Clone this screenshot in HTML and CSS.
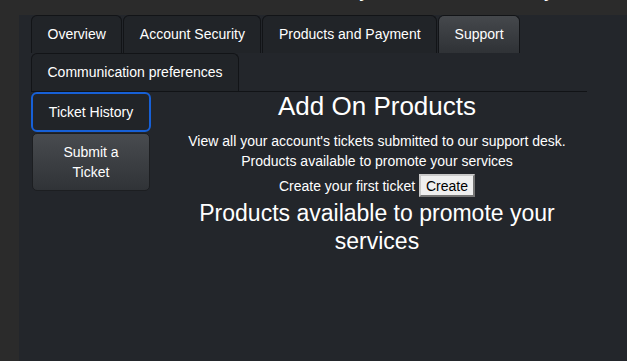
FILE: index.html
```html
<!DOCTYPE html>
<html lang="en">
<head>
    <meta charset="UTF-8">
    <meta name="viewport" content="width=device-width, initial-scale=1.0">
    <title>Support</title>
    <link rel="stylesheet" href="styles.css">
</head>
<body>
    <header class="page-title">
        <h1>My Account Summary</h1>
    </header>

    <main class="panel">
        <nav class="tabs">
            <button class="tab">Overview</button>
            <button class="tab">Account Security</button>
            <button class="tab">Products and Payment</button>
            <button class="tab active">Support</button>
            <button class="tab">Communication preferences</button>
        </nav>

        <div class="support">
            <div class="side-pills">
                <button class="pill selected">Ticket History</button>
                <button class="pill">Submit a Ticket</button>
            </div>

            <section class="support-content">
                <h2>Add On Products</h2>
                <p>View all your account's tickets submitted to our support desk.</p>
                <p>Products available to promote your services</p>
                <p class="create-row">Create your first ticket <button class="create-btn">Create</button></p>
                <h3>Products available to promote your services</h3>
            </section>
        </div>
    </main>
</body>
</html>
```

FILE: styles.css
```css
body {
    margin: 0;
    padding: 0;
    background: #2b2b2b;
    color: white;
    font-family: "Liberation Sans", Arial, sans-serif;
    height: 100vh;
    overflow: hidden;
}

/* title sits mostly above the viewport, only the descenders peek out */
.page-title {
    height: 15px;
    overflow: hidden;
    padding-left: 341px;
}

.page-title h1 {
    margin: -24px 0 0;
    font-size: 22px;
    font-weight: normal;
    line-height: 26px;
}

.panel {
    margin-left: 19px;
    background: #23262b;
    min-height: calc(100vh - 15px);
    padding: 0 40px 0 12px;
}

.tabs {
    display: flex;
    flex-wrap: wrap;
    border-bottom: 1px solid #111316;
}

.tab {
    height: 38px;
    padding: 0 15.5px 1px;
    margin-right: 1px;
    border: 1px solid #121417;
    border-bottom: none;
    border-radius: 6px 6px 0 0;
    background: #212428;
    color: white;
    font-family: inherit;
    font-size: 14px;
}

.tab.active {
    background: linear-gradient(#45484c, #2f3236);
}

.support {
    display: flex;
    margin-right: -16px;
}

.side-pills {
    width: 120px;
    display: flex;
    flex-direction: column;
    align-items: center;
}

.pill {
    width: 118px;
    padding: 8px 18px;
    border: 1px solid #1c1e21;
    border-radius: 5px;
    background: linear-gradient(#484b4f, #303337);
    color: white;
    font-family: inherit;
    font-size: 14px;
    line-height: 20px;
}

.pill.selected {
    width: 120px;
    height: 40px;
    padding: 0 0 1px;
    margin-bottom: 1px;
    border: 2px solid #1760d6;
    border-radius: 6px;
    background: #212428;
}

.support-content {
    flex: 1;
    padding: 0 12px;
    text-align: center;
}

.support-content h2 {
    margin: -2px 0 9px;
    font-size: 26px;
    font-weight: normal;
    line-height: 32px;
}

.support-content p {
    margin: 0;
    font-size: 14px;
    line-height: 20px;
}

.create-row {
    padding-top: 3px;
}

.create-btn {
    height: 23px;
    padding: 0 5px;
    border: 2px outset #c9c9c9;
    background: #efefef;
    color: black;
    font-family: inherit;
    font-size: 14px;
}

.support-content h3 {
    margin: 2px 0 0;
    font-size: 23px;
    font-weight: normal;
    line-height: 28px;
}
```
